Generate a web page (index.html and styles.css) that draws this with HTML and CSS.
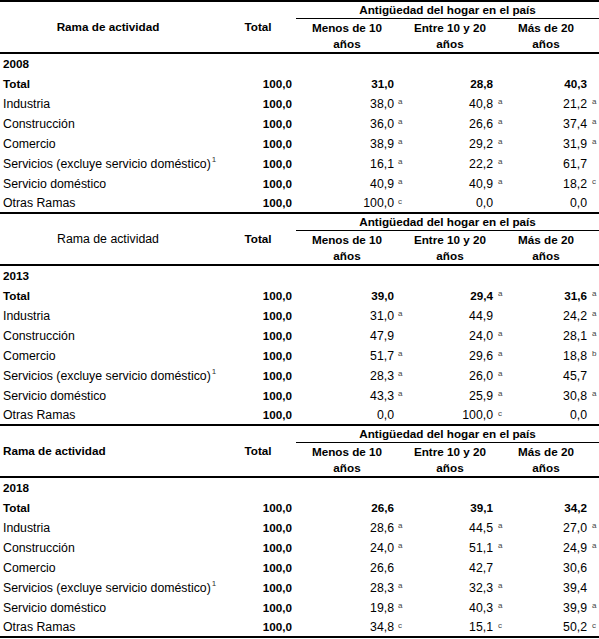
FILE: index.html
```html
<!DOCTYPE html>
<html lang="es">
<head>
<meta charset="utf-8">
<title>Rama de actividad</title>
<link rel="stylesheet" href="styles.css">
</head>
<body>
<table class="tbl">
  <colgroup>
    <col class="c-rama"><col class="c-total">
    <col class="c-mnum"><col class="c-sup8">
    <col class="c-enum"><col class="c-sup8">
    <col class="c-xnum"><col class="c-sup9">
  </colgroup>

  <tbody class="block first">
    <tr class="hrow-a">
      <th rowspan="2" class="h-rama center">Rama de actividad</th>
      <th rowspan="2" class="h-total">Total</th>
      <th colspan="6" class="h-antig">Antigüedad del hogar en el país</th>
    </tr>
    <tr class="hrow-b">
      <th colspan="2" class="h-sub h-m">Menos de 10<br>años</th>
      <th colspan="2" class="h-sub h-e">Entre 10 y 20<br>años</th>
      <th colspan="2" class="h-sub h-x">Más de 20<br>años</th>
    </tr>
    <tr class="row year"><td class="lbl b" colspan="8">2008</td></tr>
    <tr class="row b"><td class="lbl">Total</td><td class="tot">100,0</td><td class="num nm">31,0</td><td class="sp"></td><td class="num ne">28,8</td><td class="sp"></td><td class="num nx">40,3</td><td class="sp"></td></tr>
    <tr class="row"><td class="lbl">Industria</td><td class="tot">100,0</td><td class="num nm">38,0</td><td class="sp">a</td><td class="num ne">40,8</td><td class="sp">a</td><td class="num nx">21,2</td><td class="sp">a</td></tr>
    <tr class="row"><td class="lbl">Construcción</td><td class="tot">100,0</td><td class="num nm">36,0</td><td class="sp">a</td><td class="num ne">26,6</td><td class="sp">a</td><td class="num nx">37,4</td><td class="sp">a</td></tr>
    <tr class="row"><td class="lbl">Comercio</td><td class="tot">100,0</td><td class="num nm">38,9</td><td class="sp">a</td><td class="num ne">29,2</td><td class="sp">a</td><td class="num nx">31,9</td><td class="sp">a</td></tr>
    <tr class="row"><td class="lbl">Servicios (excluye servicio doméstico)<sup class="fn">1</sup></td><td class="tot">100,0</td><td class="num nm">16,1</td><td class="sp">a</td><td class="num ne">22,2</td><td class="sp">a</td><td class="num nx">61,7</td><td class="sp"></td></tr>
    <tr class="row"><td class="lbl">Servicio doméstico</td><td class="tot">100,0</td><td class="num nm">40,9</td><td class="sp">a</td><td class="num ne">40,9</td><td class="sp">a</td><td class="num nx">18,2</td><td class="sp">c</td></tr>
    <tr class="row last"><td class="lbl">Otras Ramas</td><td class="tot">100,0</td><td class="num nm">100,0</td><td class="sp">c</td><td class="num ne">0,0</td><td class="sp"></td><td class="num nx">0,0</td><td class="sp"></td></tr>
  </tbody>

  <tbody class="block">
    <tr class="hrow-a">
      <th rowspan="2" class="h-rama center normal">Rama de actividad</th>
      <th rowspan="2" class="h-total">Total</th>
      <th colspan="6" class="h-antig">Antigüedad del hogar en el país</th>
    </tr>
    <tr class="hrow-b">
      <th colspan="2" class="h-sub h-m">Menos de 10<br>años</th>
      <th colspan="2" class="h-sub h-e">Entre 10 y 20<br>años</th>
      <th colspan="2" class="h-sub h-x">Más de 20<br>años</th>
    </tr>
    <tr class="row year"><td class="lbl b" colspan="8">2013</td></tr>
    <tr class="row b"><td class="lbl">Total</td><td class="tot">100,0</td><td class="num nm">39,0</td><td class="sp"></td><td class="num ne">29,4</td><td class="sp">a</td><td class="num nx">31,6</td><td class="sp">a</td></tr>
    <tr class="row"><td class="lbl">Industria</td><td class="tot">100,0</td><td class="num nm">31,0</td><td class="sp">a</td><td class="num ne">44,9</td><td class="sp"></td><td class="num nx">24,2</td><td class="sp">a</td></tr>
    <tr class="row"><td class="lbl">Construcción</td><td class="tot">100,0</td><td class="num nm">47,9</td><td class="sp"></td><td class="num ne">24,0</td><td class="sp">a</td><td class="num nx">28,1</td><td class="sp">a</td></tr>
    <tr class="row"><td class="lbl">Comercio</td><td class="tot">100,0</td><td class="num nm">51,7</td><td class="sp">a</td><td class="num ne">29,6</td><td class="sp">a</td><td class="num nx">18,8</td><td class="sp">b</td></tr>
    <tr class="row"><td class="lbl">Servicios (excluye servicio doméstico)<sup class="fn">1</sup></td><td class="tot">100,0</td><td class="num nm">28,3</td><td class="sp">a</td><td class="num ne">26,0</td><td class="sp">a</td><td class="num nx">45,7</td><td class="sp"></td></tr>
    <tr class="row"><td class="lbl">Servicio doméstico</td><td class="tot">100,0</td><td class="num nm">43,3</td><td class="sp">a</td><td class="num ne">25,9</td><td class="sp">a</td><td class="num nx">30,8</td><td class="sp">a</td></tr>
    <tr class="row last"><td class="lbl">Otras Ramas</td><td class="tot">100,0</td><td class="num nm">0,0</td><td class="sp"></td><td class="num ne">100,0</td><td class="sp">c</td><td class="num nx">0,0</td><td class="sp"></td></tr>
  </tbody>

  <tbody class="block">
    <tr class="hrow-a">
      <th rowspan="2" class="h-rama left">Rama de actividad</th>
      <th rowspan="2" class="h-total">Total</th>
      <th colspan="6" class="h-antig">Antigüedad del hogar en el país</th>
    </tr>
    <tr class="hrow-b">
      <th colspan="2" class="h-sub h-m">Menos de 10<br>años</th>
      <th colspan="2" class="h-sub h-e">Entre 10 y 20<br>años</th>
      <th colspan="2" class="h-sub h-x">Más de 20<br>años</th>
    </tr>
    <tr class="row year"><td class="lbl b" colspan="8">2018</td></tr>
    <tr class="row b"><td class="lbl">Total</td><td class="tot">100,0</td><td class="num nm">26,6</td><td class="sp"></td><td class="num ne">39,1</td><td class="sp"></td><td class="num nx">34,2</td><td class="sp"></td></tr>
    <tr class="row"><td class="lbl">Industria</td><td class="tot">100,0</td><td class="num nm">28,6</td><td class="sp">a</td><td class="num ne">44,5</td><td class="sp">a</td><td class="num nx">27,0</td><td class="sp">a</td></tr>
    <tr class="row"><td class="lbl">Construcción</td><td class="tot">100,0</td><td class="num nm">24,0</td><td class="sp">a</td><td class="num ne">51,1</td><td class="sp">a</td><td class="num nx">24,9</td><td class="sp">a</td></tr>
    <tr class="row"><td class="lbl">Comercio</td><td class="tot">100,0</td><td class="num nm">26,6</td><td class="sp"></td><td class="num ne">42,7</td><td class="sp"></td><td class="num nx">30,6</td><td class="sp"></td></tr>
    <tr class="row"><td class="lbl">Servicios (excluye servicio doméstico)<sup class="fn">1</sup></td><td class="tot">100,0</td><td class="num nm">28,3</td><td class="sp">a</td><td class="num ne">32,3</td><td class="sp">a</td><td class="num nx">39,4</td><td class="sp"></td></tr>
    <tr class="row"><td class="lbl">Servicio doméstico</td><td class="tot">100,0</td><td class="num nm">19,8</td><td class="sp">a</td><td class="num ne">40,3</td><td class="sp">a</td><td class="num nx">39,9</td><td class="sp">a</td></tr>
    <tr class="row last"><td class="lbl">Otras Ramas</td><td class="tot">100,0</td><td class="num nm">34,8</td><td class="sp">c</td><td class="num ne">15,1</td><td class="sp">c</td><td class="num nx">50,2</td><td class="sp">c</td></tr>
  </tbody>
</table>
</body>
</html>
```

FILE: styles.css
```css
html, body {
  margin: 0;
  padding: 0;
  background: #ffffff;
}

.tbl {
  width: 599px;
  border-collapse: separate;
  border-spacing: 0;
  table-layout: fixed;
  font-family: "Liberation Sans", Arial, sans-serif;
  font-size: 12.3px;
  color: #000;
}

.c-rama { width: 218px; }
.c-total { width: 78px; }
.c-mnum { width: 100px; }
.c-enum { width: 92px; }
.c-xnum { width: 86px; }
.c-sup8 { width: 8px; }
.c-sup9 { width: 9px; }

.tbl th,
.tbl td {
  padding: 0;
  white-space: nowrap;
  overflow: visible;
  box-sizing: border-box;
}

.tbl th {
  font-weight: bold;
  font-size: 11.7px;
  line-height: 16px;
  vertical-align: middle;
}

.tbl .first .hrow-a th {
  border-top: 2px solid #000;
}

.tbl .hrow-a th {
  height: 17px;
}

.tbl th.h-rama,
.tbl th.h-total {
  border-bottom: 2px solid #000;
}

.tbl th.h-rama.center { text-align: center; padding-right: 2px; }
.tbl th.h-rama.left { text-align: left; padding-left: 3px; }
.tbl th.h-rama.normal { font-weight: normal; font-size: 12.3px; }

.tbl th.h-total { text-align: center; padding-left: 2px; }

.tbl th.h-antig {
  text-align: center;
  border-bottom: 1px solid #000;
}

.tbl .hrow-b th {
  height: 35px;
  border-bottom: 2px solid #000;
  text-align: center;
}

.tbl th.h-m { padding-right: 6px; }
.tbl th.h-e { padding-right: 8px; }
.tbl th.h-x { padding-right: 11px; }

.tbl .row td {
  height: 20px;
  line-height: 20px;
  vertical-align: middle;
}

.tbl .row.last td {
  line-height: 18px;
  border-bottom: 2px solid #000;
}

.tbl .row.b td,
.tbl td.b,
.tbl td.tot {
  font-weight: bold;
  font-size: 11.7px;
}

.tbl td.lbl {
  text-align: left;
  padding-left: 3px;
}

.tbl td.tot {
  text-align: right;
  padding-right: 4px;
}

.tbl td.num { text-align: right; }
.tbl td.nm { padding-right: 2px; }
.tbl td.ne { padding-right: 3px; }
.tbl td.nx { padding-right: 3px; }

.tbl .row td.sp {
  font-size: 8px;
  line-height: 8px;
  vertical-align: top;
  padding-top: 4px;
  padding-left: 2px;
  color: #444;
  font-weight: normal;
}

.fn {
  font-size: 8px;
  line-height: 0;
  position: relative;
  top: -1px;
  margin-left: 1px;
  color: #333;
}
```
